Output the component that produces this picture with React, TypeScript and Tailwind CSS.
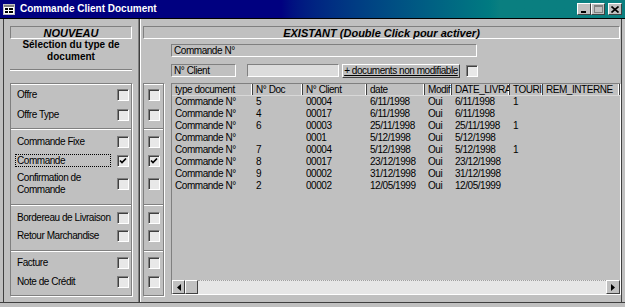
import React from 'react';

const NARROW = "font-['Liberation_Sans',Arial,sans-serif] text-[10px] tracking-[-0.45px] leading-[12px]";
const BOLD = "font-['Liberation_Sans',Arial,sans-serif] font-bold tracking-normal";
const SUNKEN = 'border border-t-[#808080] border-l-[#808080] border-b-white border-r-white';
const RAISED = 'border border-t-white border-l-white border-b-[#404040] border-r-[#404040]';

function Check({checked}: {checked?: boolean}) {
    return (
        <span className="flex items-center justify-center w-[12px] h-[12px] shrink-0 bg-[#e8e8e8] border border-t-[#808080] border-l-[#808080] border-b-white border-r-white shadow-[inset_1px_1px_0_#404040]">
            {checked && (
                <svg width="8" height="8" viewBox="0 0 8 8">
                    <polyline points="1,3.5 3,5.5 7,1.5" fill="none" stroke="#000" strokeWidth="1.7" />
                </svg>
            )}
        </span>
    );
}

// hauteurs des 4 sections (identiques à gauche et dans la colonne du milieu)
const sections = [
    {h: 'h-[45px]', pt: 'pt-[0px]'},
    {h: 'h-[76px]', pt: 'pt-[2px]'},
    {h: 'h-[46px]', pt: 'pt-[3px]'},
    {h: 'h-[44px]', pt: 'pt-[1px]'},
];

const leftRows: {label: React.ReactNode; h: string; checked?: boolean; focus?: boolean}[][] = [
    [
        {label: 'Offre', h: 'h-[20px]'},
        {label: 'Offre Type', h: 'h-[20px]'},
    ],
    [
        {label: 'Commande Fixe', h: 'h-[19px]'},
        {label: 'Commande', h: 'h-[19px]', checked: true, focus: true},
        {label: <>Confirmation de<br />Commande</>, h: 'h-[27px]'},
    ],
    [
        {label: 'Bordereau de Livraison', h: 'h-[18px]'},
        {label: 'Retour Marchandise', h: 'h-[18px]'},
    ],
    [
        {label: 'Facture', h: 'h-[19px]'},
        {label: 'Note de Crédit', h: 'h-[19px]'},
    ],
];

const columns = [
    {title: 'type document', w: 'w-[81px]'},
    {title: 'N° Doc', w: 'w-[50px]'},
    {title: 'N° Client', w: 'w-[64px]'},
    {title: 'date', w: 'w-[58px]'},
    {title: 'Modif', w: 'w-[27px]'},
    {title: 'DATE_LIVRA', w: 'w-[58px]'},
    {title: 'TOURI', w: 'w-[33px]'},
    {title: 'REM_INTERNE', w: 'flex-1'},
];

const rows = [
    ['Commande N°', '5', '00004', '6/11/1998', 'Oui', '6/11/1998', '1', ''],
    ['Commande N°', '4', '00017', '6/11/1998', 'Oui', '6/11/1998', '', ''],
    ['Commande N°', '6', '00003', '25/11/1998', 'Oui', '25/11/1998', '1', ''],
    ['Commande N°', '', '0001', '5/12/1998', 'Oui', '5/12/1998', '', ''],
    ['Commande N°', '7', '00004', '5/12/1998', 'Oui', '5/12/1998', '1', ''],
    ['Commande N°', '8', '00017', '23/12/1998', 'Oui', '23/12/1998', '', ''],
    ['Commande N°', '9', '00002', '31/12/1998', 'Oui', '31/12/1998', '', ''],
    ['Commande N°', '2', '00002', '12/05/1999', 'Oui', '12/05/1999', '', ''],
];

function Frame({children}: {children: (i: number) => React.ReactNode}) {
    return (
        <div className="border border-[#808080] shadow-[1px_1px_0_#fff]">
            {sections.map((s, i) => (
                <div
                    key={i}
                    className={`${s.h} ${s.pt} border-t border-t-white ${i < 3 ? 'border-b border-b-[#808080]' : ''}`}
                >
                    {children(i)}
                </div>
            ))}
        </div>
    );
}

function CaptionButton({children}: {children: React.ReactNode}) {
    return (
        <span className={`flex items-center justify-center w-[14px] h-[12px] bg-[#c0c0c0] ${RAISED}`}>
            {children}
        </span>
    );
}

export default function App() {
    return (
        <div className={`w-[625px] h-[307px] bg-[#c0c0c0] text-black overflow-hidden ${NARROW}`}>
            {/* barre de titre */}
            <div className="h-[18px] flex items-center bg-gradient-to-r from-[#000080] from-45% to-[#0a7f80] to-80% pl-[3px] pr-[3px]">
                <svg width="12" height="11" viewBox="0 0 12 11" className="shrink-0">
                    <rect x="0.5" y="0.5" width="11" height="10" fill="#fff" stroke="#c0c0c0" />
                    <rect x="1" y="1" width="10" height="2" fill="#808080" />
                    <rect x="2" y="4" width="3" height="2" fill="#000" />
                    <rect x="6" y="4" width="4" height="2" fill="#000" />
                    <rect x="2" y="7" width="3" height="2" fill="#000" />
                    <rect x="6" y="7" width="4" height="2" fill="#000" />
                </svg>
                <span className={`ml-[5px] text-white text-[10px] leading-[12px] ${BOLD}`}>Commande Client Document</span>
                <div className="ml-auto flex items-center">
                    <CaptionButton>
                        <svg width="8" height="8" viewBox="0 0 8 8"><rect x="1" y="6" width="5" height="2" fill="#000" /></svg>
                    </CaptionButton>
                    <CaptionButton>
                        <svg width="9" height="8" viewBox="0 0 9 8"><rect x="0.5" y="0.5" width="8" height="7" fill="none" stroke="#808080" /><rect x="0.5" y="0.5" width="8" height="1.5" fill="#808080" /></svg>
                    </CaptionButton>
                    <span className="ml-[3px]">
                        <CaptionButton>
                            <svg width="8" height="7" viewBox="0 0 8 7"><path d="M0.5 0.5 L7.5 6.5 M7.5 0.5 L0.5 6.5" stroke="#000" strokeWidth="1.6" /></svg>
                        </CaptionButton>
                    </span>
                </div>
            </div>

            {/* corps */}
            <div className="h-[285px] flex border-t border-t-black border-b border-b-[#404040]">
                {/* NOUVEAU */}
                <div className="ml-[3px] w-[135px] border-l border-l-[#404040] px-[6px] pt-[7px]">
                    <div className={`h-[13px] flex items-center justify-center ${SUNKEN} italic text-[11px] ${BOLD}`}>NOUVEAU</div>
                    <div className={`h-[24px] text-center text-[10px] leading-[12px] ${BOLD}`}>
                        Sélection du type de<br />document
                    </div>
                    <div className="mt-[6px] h-[2px] border-t border-t-[#808080] border-b border-b-white" />
                    <div className="mt-[12px]">
                        <Frame>
                            {(i) =>
                                leftRows[i].map((r, j) => (
                                    <div key={j} className={`${r.h} flex items-center justify-between pl-[6px] pr-[2px]`}>
                                        {r.focus ? (
                                            <span className="-ml-[2px] pl-[1px] w-[96px] h-[13px] flex items-center border border-dotted border-black">
                                                {r.label}
                                            </span>
                                        ) : (
                                            <span className="whitespace-nowrap">{r.label}</span>
                                        )}
                                        <Check checked={r.checked} />
                                    </div>
                                ))
                            }
                        </Frame>
                    </div>
                </div>

                {/* séparateur vertical */}
                <div className="w-[3px] border-l border-l-[#808080] border-r border-r-white bg-[#404040]" />

                {/* EXISTANT */}
                <div className="ml-[2px] w-[479px] pt-[7px] border-r border-r-[#404040]">
                    <div className={`w-[477px] h-[13px] flex items-center justify-center ${SUNKEN} italic text-[11px] ${BOLD}`}>
                        EXISTANT (Double Click pour activer)
                    </div>
                    <div className={`mt-[5px] ml-[28px] w-[306px] h-[13px] flex items-center pl-[2px] ${SUNKEN}`}>Commande N°</div>
                    <div className="mt-[7px] ml-[28px] h-[13px] flex items-center">
                        <div className={`w-[65px] h-[13px] flex items-center pl-[2px] ${SUNKEN}`}>N° Client</div>
                        <div className={`ml-[11px] w-[92px] h-[13px] bg-[#dcdcdc] ${SUNKEN}`} />
                        <div className={`ml-[3px] w-[118px] h-[14px] flex items-center justify-center whitespace-nowrap ${RAISED}`}>
                            <span className="underline">+ documents non modifiable</span>
                        </div>
                        <span className="ml-[6px]"><Check /></span>
                    </div>

                    <div className="mt-[6px] flex">
                        {/* colonne de cases du milieu */}
                        <div className="w-[21px]">
                            <Frame>
                                {(i) =>
                                    leftRows[i].map((r, j) => (
                                        <div key={j} className={`${r.h} flex items-center justify-center`}>
                                            <Check checked={r.checked} />
                                        </div>
                                    ))
                                }
                            </Frame>
                        </div>

                        {/* grille */}
                        <div className={`ml-[7px] w-[450px] h-[212px] flex flex-col ${SUNKEN}`}>
                            <div className="h-[12px] flex border-b border-b-[#d8d8d8]">
                                {columns.map((c) => (
                                    <div
                                        key={c.title}
                                        className={`${c.w} pl-[3px] whitespace-nowrap overflow-hidden border-r border-r-[#404040] shadow-[inset_-1px_0_0_#fff]`}
                                    >
                                        {c.title}
                                    </div>
                                ))}
                            </div>
                            {rows.map((r, i) => (
                                <div key={i} className="h-[12px] flex">
                                    {r.map((v, j) => (
                                        <div key={j} className={`${columns[j].w} pl-[3px] whitespace-nowrap overflow-hidden`}>
                                            {v}
                                        </div>
                                    ))}
                                </div>
                            ))}
                            <div className="flex-1" />
                            <div className="h-[14px] flex">
                                <span className={`w-[13px] h-[14px] flex items-center justify-center bg-[#c0c0c0] ${RAISED}`}>
                                    <svg width="4" height="7" viewBox="0 0 4 7"><path d="M4 0 L0 3.5 L4 7 Z" fill="#000" /></svg>
                                </span>
                                <span className={`w-[13px] h-[14px] bg-[#c0c0c0] ${RAISED}`} />
                                <span className="flex-1 bg-[#e6e6e6] border-t border-dotted border-t-[#a0a0a0]" />
                                <span className={`w-[14px] h-[14px] flex items-center justify-center bg-[#c0c0c0] ${RAISED}`}>
                                    <svg width="4" height="7" viewBox="0 0 4 7"><path d="M0 0 L4 3.5 L0 7 Z" fill="#000" /></svg>
                                </span>
                            </div>
                        </div>
                    </div>
                </div>
            </div>
        </div>
    );
}
